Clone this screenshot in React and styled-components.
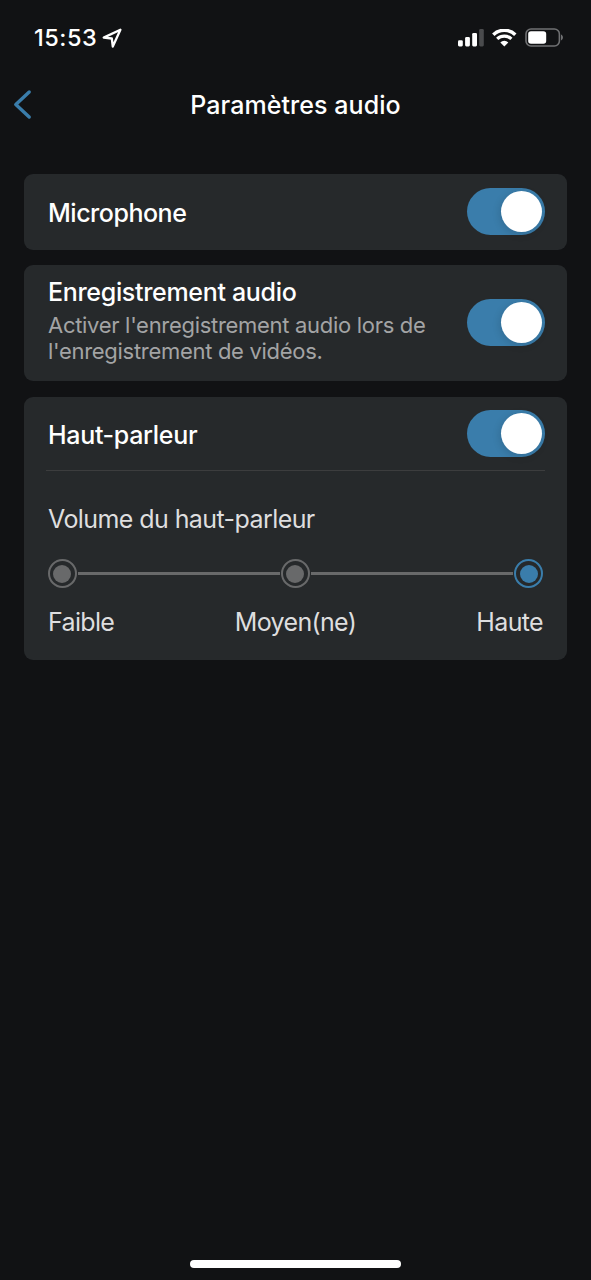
import React, { useState } from "react";
import styled, { ThemeProvider, createGlobalStyle } from "styled-components";

const theme = {
  background: "#111214",
  card: "#26292b",
  accent: "#3a7dab",
  text: "#ffffff",
  label: "#dededf",
  muted: "#a3a4a5",
  track: "#68696a",
  divider: "#3c3d3e"
};

const GlobalStyle = createGlobalStyle`
  * {
    box-sizing: border-box;
  }
  body {
    margin: 0;
    background-color: ${theme.background};
    font-family: Inter, "Liberation Sans", sans-serif;
    -webkit-font-smoothing: antialiased;
  }
`;

const Screen = styled.div`
  height: 1280px;
  width: 591px;
  display: flex;
  flex-direction: column;
  overflow: hidden;
  color: ${({ theme }) => theme.text};
  background-color: ${({ theme }) => theme.background};
`;

const StatusBar = styled.div`
  height: 74px;
  padding: 1px 27px 0 34px;
  display: flex;
  flex-direction: row;
  align-items: center;
  justify-content: space-between;
`;

const StatusGroup = styled.div`
  display: flex;
  flex-direction: row;
  align-items: center;
  gap: ${({ $gap }) => $gap}px;
  svg {
    display: block;
  }
`;

const Time = styled.span`
  font-size: 23.5px;
  font-weight: 550;
  line-height: 30px;
  letter-spacing: 0.5px;
`;

const Header = styled.header`
  height: 62px;
  padding: 0 13px;
  display: grid;
  grid-template-columns: 40px 1fr 40px;
  align-items: center;
`;

const BackButton = styled.button`
  padding: 0 0 2px;
  border: 0;
  background: none;
  cursor: pointer;
  color: ${({ theme }) => theme.accent};
  svg {
    display: block;
  }
`;

const Title = styled.h1`
  margin: 0;
  font-size: 25px;
  font-weight: 550;
  line-height: 32px;
  letter-spacing: 0.07px;
  text-align: center;
  white-space: nowrap;
`;

const Settings = styled.main`
  flex: 1;
  padding: 38px 24px 0 23.5px;
  display: flex;
  flex-direction: column;
`;

const Card = styled.section`
  margin-bottom: ${({ $gap = 0 }) => $gap}px;
  padding: 0 22px 0 24.5px;
  border-radius: 9px;
  background-color: ${({ theme }) => theme.card};
`;

const Row = styled.div`
  height: ${({ $height }) => $height}px;
  padding-bottom: ${({ $lift = 0 }) => $lift}px;
  display: flex;
  flex-direction: row;
  align-items: center;
  justify-content: space-between;
`;

const RowText = styled.div`
  display: flex;
  flex-direction: column;
  gap: 4px;
`;

const RowTitle = styled.span`
  font-size: 25px;
  font-weight: 500;
  line-height: 32px;
  letter-spacing: ${({ $spacing = -0.32 }) => $spacing}px;
  white-space: nowrap;
  ${Row} > & {
    padding-top: 2px;
  }
`;

const Description = styled.p`
  margin: 0 0 6px;
  width: 390px;
  font-size: 22px;
  line-height: 26px;
  letter-spacing: -0.3px;
  color: ${({ theme }) => theme.muted};
`;

const Switch = styled.button`
  flex: none;
  height: 47px;
  width: 78px;
  padding: 3px;
  border: 0;
  border-radius: 24px;
  display: flex;
  align-items: center;
  justify-content: ${({ $on }) => ($on ? "flex-end" : "flex-start")};
  cursor: pointer;
  background-color: ${({ $on, theme }) => ($on ? theme.accent : theme.track)};
`;

const Thumb = styled.span`
  height: 41px;
  width: 41px;
  border-radius: 50%;
  background-color: #ffffff;
  box-shadow: -1px 2px 8px rgba(0, 0, 0, 0.14);
`;

const Divider = styled.hr`
  height: 1px;
  margin: 0 0 0 -2px;
  border: 0;
  background-color: ${({ theme }) => theme.divider};
`;

const Volume = styled.div`
  height: 189px;
  padding: 32px 2px 0 0;
  color: ${({ theme }) => theme.label};
`;

const VolumeTitle = styled.div`
  font-size: 25px;
  line-height: 32px;
  letter-spacing: -0.58px;
`;

const Track = styled.div`
  margin: 24px 0 0 -0.5px;
  display: flex;
  flex-direction: row;
  align-items: center;
`;

const Line = styled.span`
  flex: 1;
  height: 3px;
  margin: 0 1px;
  background-color: ${({ theme }) => theme.track};
`;

const Stop = styled.button`
  flex: none;
  height: 29px;
  width: 29px;
  padding: 0;
  border: 2px solid;
  border-radius: 50%;
  display: flex;
  align-items: center;
  justify-content: center;
  background: none;
  cursor: pointer;
  color: ${({ $active, theme }) => ($active ? theme.accent : theme.track)};
  &:before {
    content: "";
    height: 18px;
    width: 18px;
    border-radius: 50%;
    background-color: currentColor;
  }
`;

const Labels = styled.div`
  margin-top: 18px;
  display: grid;
  grid-template-columns: 1fr auto 1fr;
  font-size: 25px;
  line-height: 32px;
  letter-spacing: -0.65px;
  span:last-child {
    text-align: right;
  }
`;

const HomeIndicator = styled.div`
  height: 8px;
  width: 211px;
  margin: 0 auto 12px;
  border-radius: 4px;
  background-color: #ffffff;
`;

const LocationIcon = () => (
  <svg width="20" height="20" viewBox="0 0 20 20" fill="none">
    <path
      d="M18.4 1.7L1.7 9.6L9.8 10.5L10.8 18.5Z"
      stroke="#fff"
      strokeWidth="2.3"
      strokeLinejoin="round"
    />
  </svg>
);

const SignalIcon = () => (
  <svg width="26" height="18" viewBox="0 0 26 18" fill="#fff">
    <rect x="0" y="11.2" width="4.8" height="6.2" rx="1.3" />
    <rect x="7.1" y="8" width="4.8" height="9.4" rx="1.3" />
    <rect x="14.2" y="4" width="4.8" height="13.4" rx="1.3" />
    <rect x="21.2" y="0" width="4.6" height="17.4" rx="1.3" fill="#4a4b4d" />
  </svg>
);

const WifiIcon = () => (
  <svg width="25" height="18" viewBox="0 0 25 18" fill="none">
    <path d="M1.3 5.7A16 16 0 0 1 23.3 5.7" stroke="#fff" strokeWidth="3.5" />
    <path d="M5.2 9.9A10.4 10.4 0 0 1 19.4 9.9" stroke="#fff" strokeWidth="3.2" />
    <path d="M8.3 13.4A5.9 5.9 0 0 1 16.3 13.4L12.3 17.5Z" fill="#fff" />
  </svg>
);

const BatteryIcon = () => (
  <svg width="39" height="19" viewBox="0 0 39 19" fill="none">
    <rect x="1" y="1" width="33.4" height="17" rx="5" stroke="#707173" strokeWidth="1.6" />
    <rect x="3.2" y="3.2" width="18" height="12.6" rx="2.8" fill="#fff" />
    <path d="M36 6.6C38.6 7.4 38.6 11.6 36 12.4Z" fill="#707173" />
  </svg>
);

const BackIcon = () => (
  <svg width="19" height="31" viewBox="0 0 19 31" fill="none">
    <path
      d="M16.2 3L2.8 15.5L16.2 28"
      stroke="currentColor"
      strokeWidth="3.4"
      strokeLinecap="round"
      strokeLinejoin="round"
    />
  </svg>
);

const Toggle = ({ label }) => {
  const [on, setOn] = useState(true);
  return (
    <Switch $on={on} role="switch" aria-checked={on} aria-label={label} onClick={() => setOn(!on)}>
      <Thumb />
    </Switch>
  );
};

const volumeLevels = ["Faible", "Moyen(ne)", "Haute"];

const VolumeSlider = () => {
  const [level, setLevel] = useState(2);
  return (
    <Volume>
      <VolumeTitle>Volume du haut-parleur</VolumeTitle>
      <Track>
        {volumeLevels.map((name, index) => (
          <React.Fragment key={name}>
            {index > 0 && <Line />}
            <Stop $active={index === level} aria-label={name} onClick={() => setLevel(index)} />
          </React.Fragment>
        ))}
      </Track>
      <Labels>
        {volumeLevels.map(name => (
          <span key={name}>{name}</span>
        ))}
      </Labels>
    </Volume>
  );
};

const App = () => (
  <ThemeProvider theme={theme}>
    <GlobalStyle />
    <Screen>
      <StatusBar>
        <StatusGroup $gap={5}>
          <Time>15:53</Time>
          <LocationIcon />
        </StatusGroup>
        <StatusGroup $gap={8}>
          <SignalIcon />
          <WifiIcon />
          <BatteryIcon />
        </StatusGroup>
      </StatusBar>
      <Header>
        <BackButton aria-label="Retour">
          <BackIcon />
        </BackButton>
        <Title>Paramètres audio</Title>
      </Header>
      <Settings>
        <Card $gap={15}>
          <Row $height={76} $lift={1}>
            <RowTitle $spacing={-0.48}>Microphone</RowTitle>
            <Toggle label="Microphone" />
          </Row>
        </Card>
        <Card $gap={16}>
          <Row $height={116} $lift={1}>
            <RowText>
              <RowTitle>Enregistrement audio</RowTitle>
              <Description>
                Activer l'enregistrement audio lors de l'enregistrement de vidéos.
              </Description>
            </RowText>
            <Toggle label="Enregistrement audio" />
          </Row>
        </Card>
        <Card>
          <Row $height={73}>
            <RowTitle>Haut-parleur</RowTitle>
            <Toggle label="Haut-parleur" />
          </Row>
          <Divider />
          <VolumeSlider />
        </Card>
      </Settings>
      <HomeIndicator />
    </Screen>
  </ThemeProvider>
);

export default App;
